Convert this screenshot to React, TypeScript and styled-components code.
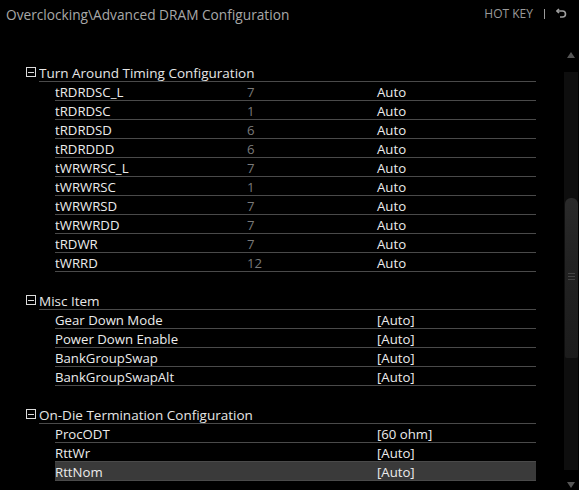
import styled, { createGlobalStyle } from 'styled-components';

interface Item {
  name: string;
  current?: string;
  value: string;
  selected?: boolean;
}

interface Group {
  title: string;
  items: Item[];
}

const groups: Group[] = [
  {
    title: 'Turn Around Timing Configuration',
    items: [
      { name: 'tRDRDSC_L', current: '7', value: 'Auto' },
      { name: 'tRDRDSC', current: '1', value: 'Auto' },
      { name: 'tRDRDSD', current: '6', value: 'Auto' },
      { name: 'tRDRDDD', current: '6', value: 'Auto' },
      { name: 'tWRWRSC_L', current: '7', value: 'Auto' },
      { name: 'tWRWRSC', current: '1', value: 'Auto' },
      { name: 'tWRWRSD', current: '7', value: 'Auto' },
      { name: 'tWRWRDD', current: '7', value: 'Auto' },
      { name: 'tRDWR', current: '7', value: 'Auto' },
      { name: 'tWRRD', current: '12', value: 'Auto' },
    ],
  },
  {
    title: 'Misc Item',
    items: [
      { name: 'Gear Down Mode', value: '[Auto]' },
      { name: 'Power Down Enable', value: '[Auto]' },
      { name: 'BankGroupSwap', value: '[Auto]' },
      { name: 'BankGroupSwapAlt', value: '[Auto]' },
    ],
  },
  {
    title: 'On-Die Termination Configuration',
    items: [
      { name: 'ProcODT', value: '[60 ohm]' },
      { name: 'RttWr', value: '[Auto]' },
      { name: 'RttNom', value: '[Auto]', selected: true },
    ],
  },
];

const GlobalStyle = createGlobalStyle`
  html, body {
    margin: 0;
    padding: 0;
    background: #000;
  }
  body {
    font-family: "Open Sans", "Noto Sans", sans-serif;
    color: #e6e6e6;
  }
`;

const Screen = styled.div`
  width: 579px;
  height: 490px;
  background: #000;
  overflow: hidden;
  display: flex;
  flex-direction: column;
`;

const TopBar = styled.div`
  height: 44px;
  display: flex;
  justify-content: space-between;
  align-items: flex-start;
  padding: 5px 12px 0 6px;
  box-sizing: border-box;
`;

const Path = styled.div`
  font-size: 13.7px;
  color: #a8a8a8;
  line-height: 20px;
`;

const HotKey = styled.div`
  display: flex;
  align-items: center;
  gap: 11px;
  font-size: 12px;
  color: #9a9a9a;
  line-height: 17px;
`;

const Divider = styled.span`
  width: 1px;
  height: 10px;
  background: #9a9a9a;
`;

const Main = styled.div`
  flex: 1;
  display: flex;
  min-height: 0;
`;

const List = styled.div`
  width: 536px;
  padding: 19px 0 0 26px;
  box-sizing: border-box;
`;

const Section = styled.div`
  & + & {
    margin-top: 19px;
  }
`;

const SectionHead = styled.div`
  display: flex;
  align-items: center;
  gap: 3px;
`;

const Toggle = styled.span`
  width: 8px;
  height: 8px;
  border: 1px solid #dcdcdc;
  position: relative;
  flex: none;
  margin-bottom: 2px;

  &::after {
    content: '';
    position: absolute;
    left: 1px;
    right: 1px;
    top: 4px;
    height: 1px;
    background: #dcdcdc;
  }
`;

const HeadLabel = styled.div`
  flex: 1;
  height: 18px;
  line-height: 20px;
  font-size: 13.5px;
  color: #e6e6e6;
  border-bottom: 1px solid #4a4a4a;
  overflow: hidden;
`;

const Row = styled.div<{ $selected?: boolean }>`
  margin-left: 29px;
  height: 18px;
  line-height: 20px;
  font-size: 13.2px;
  display: grid;
  grid-template-columns: 192px 130px 1fr;
  border-bottom: 1px solid #4a4a4a;
  background: ${(p) => (p.$selected ? '#3a3a3a' : 'transparent')};
  color: #ececec;
  overflow: hidden;
`;

const Current = styled.span`
  color: #7a7a7a;
`;

const Scroll = styled.div`
  margin-left: 28px;
  width: 14px;
  display: flex;
  flex-direction: column;
  align-items: center;
`;

const Arrow = styled.div<{ $down?: boolean }>`
  width: 0;
  height: 0;
  border-left: 4px solid transparent;
  border-right: 4px solid transparent;
  ${(p) =>
    p.$down
      ? 'border-top: 6px solid #555; margin-top: 12px;'
      : 'border-bottom: 6px solid #555; margin-top: 8px;'}
`;

const Track = styled.div`
  margin-top: 14px;
  width: 14px;
  height: 398px;
  background: #0e0e0e;
  position: relative;
`;

const Thumb = styled.div`
  position: absolute;
  left: 1px;
  right: 0;
  top: 126px;
  height: 160px;
  border-radius: 6px 6px 2px 2px;
  background: linear-gradient(#2a2a2a, #222 40%, #1c1c1c);
`;

const Grip = styled.div`
  position: absolute;
  left: 3px;
  right: 3px;
  top: 75px;
  height: 8px;
  background: repeating-linear-gradient(#444 0 1px, transparent 1px 3px);
`;

function ReturnIcon() {
  return (
    <svg width="11" height="11" viewBox="0 0 11 11" fill="none" stroke="#a0a0a0" strokeWidth="1.6">
      <path d="M3 1 L1 3 L3 5" />
      <path d="M1 3 H6.5 A3 3 0 0 1 6.5 9 H4" />
    </svg>
  );
}

export default function App() {
  return (
    <>
      <GlobalStyle />
      <Screen>
        <TopBar>
          <Path>Overclocking\Advanced DRAM Configuration</Path>
          <HotKey>
            HOT KEY
            <Divider />
            <ReturnIcon />
          </HotKey>
        </TopBar>
        <Main>
          <List>
            {groups.map((g) => (
              <Section key={g.title}>
                <SectionHead>
                  <Toggle />
                  <HeadLabel>{g.title}</HeadLabel>
                </SectionHead>
                {g.items.map((it) => (
                  <Row key={it.name} $selected={it.selected}>
                    <span>{it.name}</span>
                    <Current>{it.current ?? ''}</Current>
                    <span>{it.value}</span>
                  </Row>
                ))}
              </Section>
            ))}
          </List>
          <Scroll>
            <Arrow />
            <Track>
              <Thumb>
                <Grip />
              </Thumb>
            </Track>
            <Arrow $down />
          </Scroll>
        </Main>
      </Screen>
    </>
  );
}
